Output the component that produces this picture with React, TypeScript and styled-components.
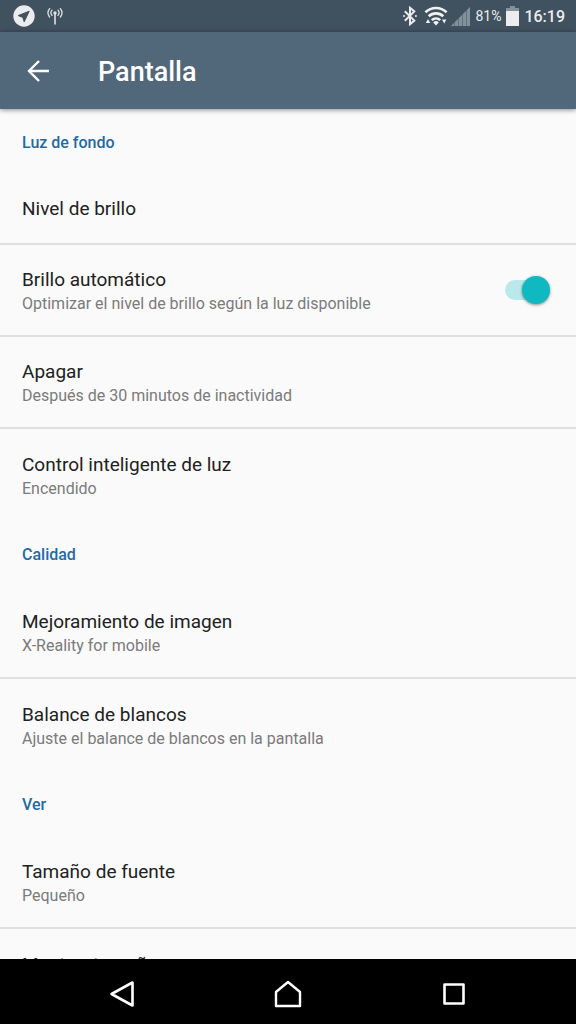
import React, { useState } from "react";
import styled, { createGlobalStyle } from "styled-components";

const GlobalStyle = createGlobalStyle`
  *, *::before, *::after { box-sizing: border-box; }
  body { margin: 0; background: #fafafa; font-family: Roboto, "Noto Sans", sans-serif; }
  button { font: inherit; color: inherit; background: none; border: 0; padding: 0; cursor: pointer; }
  svg { display: block; }
`;

const Screen = styled.div`
  height: 100vh;
  display: flex;
  flex-direction: column;
`;

const StatusBar = styled.div`
  flex: none;
  height: 32px;
  padding: 0 11px 0 13px;
  display: flex;
  align-items: center;
  justify-content: space-between;
  background: #40515f;
  color: #ececee;
`;

const StatusGroup = styled.div<{ $gap: number }>`
  display: flex;
  align-items: center;
  gap: ${(p) => p.$gap}px;
`;

const BatteryLevel = styled.span`
  font-size: 14px;
  line-height: 20px;
`;

const Clock = styled.time`
  padding-top: 2px;
  font-size: 16px;
  line-height: 20px;
  font-weight: 500;
`;

const AppBar = styled.header`
  flex: none;
  position: relative;
  z-index: 1;
  height: 77px;
  padding: 0 24px;
  display: flex;
  align-items: center;
  gap: 46px;
  background: #51677a;
  color: #fff;
  box-shadow: 0 1px 5px rgba(0, 0, 0, 0.45);
`;

const Title = styled.h1`
  margin: 0;
  padding-top: 2px;
  font-size: 27px;
  line-height: 32px;
  font-weight: 500;
`;

const Settings = styled.main`
  flex: 1;
  min-height: 0;
  overflow-y: auto;
  scrollbar-width: none;
`;

const SectionTitle = styled.h2`
  margin: 0;
  padding: 2px 22px 0;
  font-size: 16px;
  line-height: 64px;
  font-weight: 500;
  color: #1f6aa5;
`;

const Row = styled.div<{ $last?: boolean; $single?: boolean }>`
  width: 100%;
  height: ${(p) => (p.$single ? 70 : 92)}px;
  padding: 0 26px 0 22px;
  display: flex;
  align-items: center;
  justify-content: space-between;
  text-align: left;
  border-bottom: ${(p) => (p.$last ? 0 : 2)}px solid #e0e0e0;
`;

const RowText = styled.span<{ $single?: boolean }>`
  display: flex;
  flex-direction: column;
  padding-top: ${(p) => (p.$single ? 0 : 3)}px;
`;

const RowTitle = styled.span`
  font-size: 19px;
  line-height: 24px;
  color: #212121;
`;

const RowSummary = styled.span`
  font-size: 16px;
  line-height: 23px;
  color: #7b7b7b;
`;

const Switch = styled.input`
  appearance: none;
  position: relative;
  width: 45px;
  height: 28px;
  margin: 0;
  cursor: pointer;

  &::before {
    content: "";
    position: absolute;
    inset: 4px 4px 4px 0;
    border-radius: 10px;
    background: #c4c4c4;
  }
  &::after {
    content: "";
    position: absolute;
    top: 0;
    left: 0;
    width: 28px;
    height: 28px;
    border-radius: 50%;
    background: #f1f1f1;
    box-shadow: 0 1px 3px rgba(0, 0, 0, 0.45);
  }
  &:checked::before { background: #b9e9ea; }
  &:checked::after { left: 17px; background: #10b9c1; }
`;

const NavBar = styled.nav`
  flex: none;
  height: 65px;
  padding: 4px 39px 0;
  display: grid;
  grid-template-columns: repeat(3, 1fr);
  background: #000;
  color: #fff;
`;

const NavButton = styled.button`
  display: flex;
  align-items: center;
  justify-content: center;
`;

type Item = { title: string; summary?: string; toggle?: boolean };

const sections: { name: string; items: Item[] }[] = [
  {
    name: "Luz de fondo",
    items: [
      { title: "Nivel de brillo" },
      { title: "Brillo automático", summary: "Optimizar el nivel de brillo según la luz disponible", toggle: true },
      { title: "Apagar", summary: "Después de 30 minutos de inactividad" },
      { title: "Control inteligente de luz", summary: "Encendido" },
    ],
  },
  {
    name: "Calidad",
    items: [
      { title: "Mejoramiento de imagen", summary: "X-Reality for mobile" },
      { title: "Balance de blancos", summary: "Ajuste el balance de blancos en la pantalla" },
    ],
  },
  {
    name: "Ver",
    items: [
      { title: "Tamaño de fuente", summary: "Pequeño" },
      { title: "Mostrar tamaño", summary: "Predeterminado" },
    ],
  },
];

function SettingRow({ item, last }: { item: Item; last: boolean }) {
  const [on, setOn] = useState(true);
  const text = (
    <RowText $single={!item.summary}>
      <RowTitle>{item.title}</RowTitle>
      {item.summary && <RowSummary>{item.summary}</RowSummary>}
    </RowText>
  );
  if (item.toggle) {
    return (
      <Row as="label" $last={last}>
        {text}
        <Switch type="checkbox" role="switch" checked={on} onChange={(e) => setOn(e.target.checked)} />
      </Row>
    );
  }
  return (
    <Row as="button" $last={last} $single={!item.summary}>
      {text}
    </Row>
  );
}

const TelegramIcon = () => (
  <svg width="22" height="22" viewBox="0 0 22 22" aria-hidden="true">
    <circle cx="11" cy="11" r="10.7" fill="#ececee" />
    <path d="M16.2 6.2 5.2 10.6l4.6 1.8 1.4 4.4z" fill="#40515f" stroke="#40515f" strokeWidth="1" strokeLinejoin="round" />
  </svg>
);

const AntennaIcon = () => (
  <svg width="16" height="18" viewBox="0 0 16 18" fill="none" stroke="#dfe2e5" strokeWidth="1.3" strokeLinecap="round" aria-hidden="true">
    <path d="M8 6v11" strokeWidth="1.6" />
    <circle cx="8" cy="6" r="1.7" fill="#dfe2e5" stroke="none" />
    <path d="M5 3.2a4 4 0 0 0 0 5.2M11 3.2a4 4 0 0 1 0 5.2M2.6 1.6a6.8 6.8 0 0 0 0 8.4M13.4 1.6a6.8 6.8 0 0 1 0 8.4" />
  </svg>
);

const BluetoothIcon = () => (
  <svg width="14" height="20" viewBox="0 0 14 20" fill="none" stroke="#ececee" strokeWidth="2" aria-hidden="true">
    <path d="M1.8 5.2 11.3 14.6 7 18.2V1.8l4.3 3.6-9.5 9.4" />
    <path d="M1 8.9v2.2M12.9 8.9v2.2" strokeWidth="1.5" />
  </svg>
);

const WifiIcon = () => (
  <svg width="24" height="20" viewBox="0 0 24 20" aria-hidden="true">
    <g fill="none" stroke="#f1f1f3" strokeWidth="2.6">
      <path d="M1.4 6.3a15.2 15.2 0 0 1 21.2 0" />
      <path d="M4.7 10.3a10.6 10.6 0 0 1 14.6 0" />
      <path d="M7.8 14.1a6.2 6.2 0 0 1 8.4 0" />
    </g>
    <path d="M9.2 16.4a4 4 0 0 1 5.6 0L12 19.6zM1.8 17l2.2-4 2.2 4zM18 13.6h4.4l-2.2 3.8z" fill="#f1f1f3" />
  </svg>
);

const SignalIcon = () => (
  <svg width="19" height="20" viewBox="0 0 19 20" aria-hidden="true">
    <path d="M0 20 19 1v19z" fill="#62717e" />
    <path d="M0 20 3 17v3zM4 20v-4l3-3v7zM8 20v-8l3-3v11zM12 20V8l3-3v15zM16 20V4l3-3v19z" fill="#84909a" />
  </svg>
);

const BatteryIcon = () => (
  <svg width="13" height="20" viewBox="0 0 13 20" aria-hidden="true">
    <path d="M4 0h5v2h4v18H0V2h4z" fill="#84909a" />
    <path d="M0 5h13v15H0z" fill="#ececee" />
  </svg>
);

const BackArrow = () => (
  <svg width="28" height="28" viewBox="0 0 28 28" fill="none" stroke="currentColor" strokeWidth="2.4" aria-hidden="true">
    <path d="M25 14H5M15 4 5 14l10 10" />
  </svg>
);

export default function App() {
  return (
    <Screen>
      <GlobalStyle />
      <StatusBar>
        <StatusGroup $gap={12}>
          <TelegramIcon />
          <AntennaIcon />
        </StatusGroup>
        <StatusGroup $gap={5}>
          <StatusGroup $gap={7}>
            <BluetoothIcon />
            <StatusGroup $gap={3}>
              <WifiIcon />
              <SignalIcon />
            </StatusGroup>
          </StatusGroup>
          <BatteryLevel>81%</BatteryLevel>
          <BatteryIcon />
          <Clock>16:19</Clock>
        </StatusGroup>
      </StatusBar>
      <AppBar>
        <button aria-label="Atrás">
          <BackArrow />
        </button>
        <Title>Pantalla</Title>
      </AppBar>
      <Settings>
        {sections.map((section) => (
          <section key={section.name}>
            <SectionTitle>{section.name}</SectionTitle>
            {section.items.map((item, i) => (
              <SettingRow key={item.title} item={item} last={i === section.items.length - 1} />
            ))}
          </section>
        ))}
      </Settings>
      <NavBar>
        <NavButton aria-label="Volver">
          <svg width="26" height="28" viewBox="0 0 26 28" fill="none" stroke="currentColor" strokeWidth="2.6" strokeLinejoin="round">
            <path d="M23.5 2.5v23L2.5 14z" />
          </svg>
        </NavButton>
        <NavButton aria-label="Inicio">
          <svg width="28" height="28" viewBox="0 0 28 28" fill="none" stroke="currentColor" strokeWidth="2.4" strokeLinejoin="round">
            <path d="M2 26V12L14 2l12 10v14z" />
          </svg>
        </NavButton>
        <NavButton aria-label="Recientes">
          <svg width="22" height="22" viewBox="0 0 22 22" fill="none" stroke="currentColor" strokeWidth="2.6" strokeLinejoin="round">
            <path d="M1.5 1.5h19v19h-19z" />
          </svg>
        </NavButton>
      </NavBar>
    </Screen>
  );
}
